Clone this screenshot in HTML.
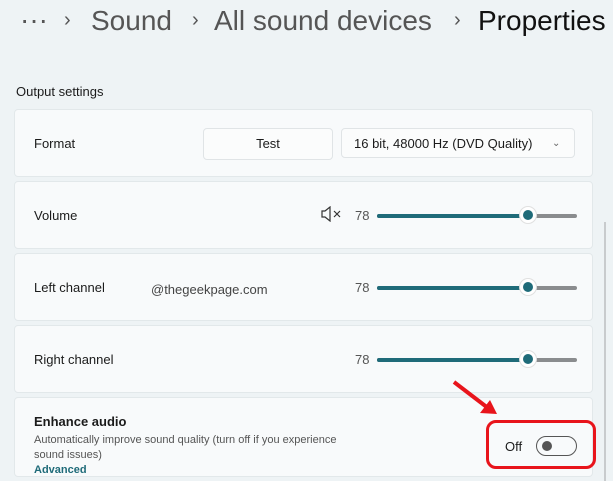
<html><head><style>
body{margin:0;width:613px;height:481px;background:#eef3f5;font-family:"Liberation Sans",sans-serif;position:relative;overflow:hidden;color:#1b1b1b}
.a{position:absolute}
.bc{position:absolute;top:5px;font-size:28px;color:#555;white-space:nowrap}
.card{position:absolute;left:14px;width:577px;background:#f8fafb;border:1px solid #e2e8ea;border-radius:4px}
.lbl{position:absolute;left:19px;font-size:13px}
.num{position:absolute;left:340px;font-size:13px;color:#555}
.tr{position:absolute;left:362px;width:200px;height:4px;background:#8a8c8e;border-radius:2px}
.tr i{position:absolute;left:0;top:0;width:150px;height:4px;background:#1f6b79;border-radius:2px}
.tr b{position:absolute;left:142px;top:-8px;width:18px;height:18px;border-radius:50%;background:#fff;border:1px solid #e0e0e0;box-sizing:border-box}
.tr b:after{content:"";position:absolute;left:3px;top:3px;width:10px;height:10px;border-radius:50%;background:#1f6b79}
</style></head><body>
<div class="bc" style="left:20px;top:4px">···</div>
<div class="bc" style="left:64px;top:9px;font-size:20px">›</div>
<div class="bc" style="left:91px">Sound</div>
<div class="bc" style="left:192px;top:9px;font-size:20px">›</div>
<div class="bc" style="left:214px">All sound devices</div>
<div class="bc" style="left:454px;top:9px;font-size:20px">›</div>
<div class="bc" style="left:478px;color:#111">Properties</div>
<div class="a" style="left:16px;top:84px;font-size:13px">Output settings</div>
<div class="card" style="top:109px;height:66px">
<div class="lbl" style="top:26px">Format</div>
<div class="a" style="left:188px;top:18px;width:128px;height:30px;border:1px solid #e0e4e6;border-radius:4px;background:#fbfcfc;text-align:center;line-height:30px;font-size:13px">Test</div>
<div class="a" style="left:326px;top:18px;height:30px;border:1px solid #e0e4e6;border-radius:4px;background:#fbfcfc;line-height:30px;font-size:13px;padding-left:12px;box-sizing:border-box;width:234px">16 bit, 48000 Hz (DVD Quality)<span style="position:absolute;left:210px;font-size:10px;color:#666">⌄</span></div>
</div>
<div class="card" style="top:181px;height:66px">
<div class="lbl" style="top:26px">Volume</div>
<svg class="a" style="left:306px;top:24px" width="22" height="16" viewBox="0 0 22 16"><path d="M1 5h3l5-4v14l-5-4H1z" fill="none" stroke="#333" stroke-width="1.2"/><path d="M13 5l6 6M19 5l-6 6" stroke="#333" stroke-width="1.2"/></svg>
<div class="num" style="top:26px">78</div><div class="tr" style="top:32px"><i></i><b></b></div>
</div>
<div class="card" style="top:253px;height:66px">
<div class="lbl" style="top:26px">Left channel</div>
<div class="a" style="left:136px;top:28px;font-size:13px;color:#444">@thegeekpage.com</div>
<div class="num" style="top:26px">78</div><div class="tr" style="top:32px"><i></i><b></b></div>
</div>
<div class="card" style="top:325px;height:66px">
<div class="lbl" style="top:26px">Right channel</div>
<div class="num" style="top:26px">78</div><div class="tr" style="top:32px"><i></i><b></b></div>
</div>
<div class="card" style="top:397px;height:78px">
<div class="lbl" style="top:16px;font-weight:bold;font-size:13px">Enhance audio</div>
<div class="lbl" style="top:35px;font-size:11px;color:#555;width:318px;line-height:15px">Automatically improve sound quality (turn off if you experience sound issues)</div>
<div class="lbl" style="top:66px;font-size:11px;color:#1f6b79;font-weight:bold">Advanced</div>
<div class="a" style="left:490px;top:41px;font-size:13px">Off</div>
<div class="a" style="left:521px;top:38px;width:41px;height:20px;border:1px solid #555;border-radius:10px;box-sizing:border-box"><div class="a" style="left:5px;top:4px;width:10px;height:10px;border-radius:50%;background:#555"></div></div>
</div>
<div class="a" style="left:486px;top:420px;width:110px;height:49px;border:3px solid #e8141b;border-radius:10px;box-sizing:border-box"></div>
<svg class="a" style="left:450px;top:378px" width="50" height="40"><path d="M4 4L38 30" stroke="#e8141b" stroke-width="4"/><path d="M30 35L47 36L40 22z" fill="#e8141b"/></svg>
<div class="a" style="left:604px;top:222px;width:2px;height:259px;background:#c8cbcd"></div>
</body></html>
